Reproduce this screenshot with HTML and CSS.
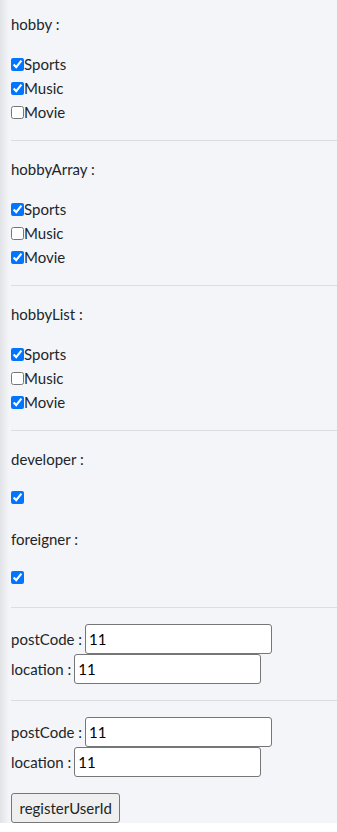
FILE: index.html
```html
<!DOCTYPE html>
<html lang="en">
<head>
    <meta charset="UTF-8">
    <title>register</title>
    <link rel="stylesheet" href="styles.css">
</head>
<body>
<div class="page">
    <div class="section">
        <p class="label">hobby :</p>
        <div class="line"><input type="checkbox" checked><span>Sports</span></div>
        <div class="line"><input type="checkbox" checked><span>Music</span></div>
        <div class="line"><input type="checkbox"><span>Movie</span></div>
    </div>
    <div class="section">
        <p class="label">hobbyArray :</p>
        <div class="line"><input type="checkbox" checked><span>Sports</span></div>
        <div class="line"><input type="checkbox"><span>Music</span></div>
        <div class="line"><input type="checkbox" checked><span>Movie</span></div>
    </div>
    <div class="section">
        <p class="label">hobbyList :</p>
        <div class="line"><input type="checkbox" checked><span>Sports</span></div>
        <div class="line"><input type="checkbox"><span>Music</span></div>
        <div class="line"><input type="checkbox" checked><span>Movie</span></div>
    </div>
    <div class="section">
        <p class="label">developer :</p>
        <div class="line single"><input type="checkbox" checked></div>
        <p class="label">foreigner :</p>
        <div class="line single"><input type="checkbox" checked></div>
    </div>
    <div class="section">
        <div class="field"><span>postCode :</span><input type="text" class="text" value="11"></div>
        <div class="field"><span>location :</span><input type="text" class="text" value="11"></div>
    </div>
    <div class="section last">
        <div class="field"><span>postCode :</span><input type="text" class="text" value="11"></div>
        <div class="field"><span>location :</span><input type="text" class="text" value="11"></div>
    </div>
    <button class="btn">registerUserId</button>
</div>
</body>
</html>
```

FILE: styles.css
```css
* {
    margin: 0;
    padding: 0
}

body {
    background-color: #fff;
    font-family: Lato, "Liberation Sans", sans-serif;
    font-size: 15px;
    color: #212529;
}

.page {
    padding-left: 11px;
    background: linear-gradient(to right, #e2e3e6 0, #f4f5f9 9px);
}

.section {
    padding: 16px 0;
    border-bottom: 1px solid #dcdde1;
}

.section:first-child {
    padding-top: 12px;
}

.section.last {
    border-bottom: 0;
}

.label {
    line-height: 24px;
    margin-bottom: 16px;
}

.line {
    display: flex;
    align-items: center;
    height: 24px;
}

.line input {
    width: 13px;
    height: 13px;
    margin: 0;
}

.section .single {
    margin-bottom: 16px;
    align-items: flex-start;
    padding-top: 4px;
    box-sizing: border-box;
}

.section .single:last-child {
    margin-bottom: 0;
}

.field {
    display: flex;
    align-items: center;
    height: 30px;
}

.field span {
    margin-right: 3px;
}

.text {
    width: 187px;
    height: 30px;
    box-sizing: border-box;
    border: 1px solid #767676;
    border-radius: 3px;
    padding: 0 3px;
    font-family: Lato, "Liberation Sans", sans-serif;
    font-size: 15px;
    color: #000;
    background: #fff;
}

.btn {
    display: block;
    height: 30px;
    padding: 0 7.5px;
    font-family: Lato, "Liberation Sans", sans-serif;
    font-size: 15px;
    color: #212529;
    background-color: #efefef;
    border: 1px solid #767676;
    border-radius: 3px;
}
```
